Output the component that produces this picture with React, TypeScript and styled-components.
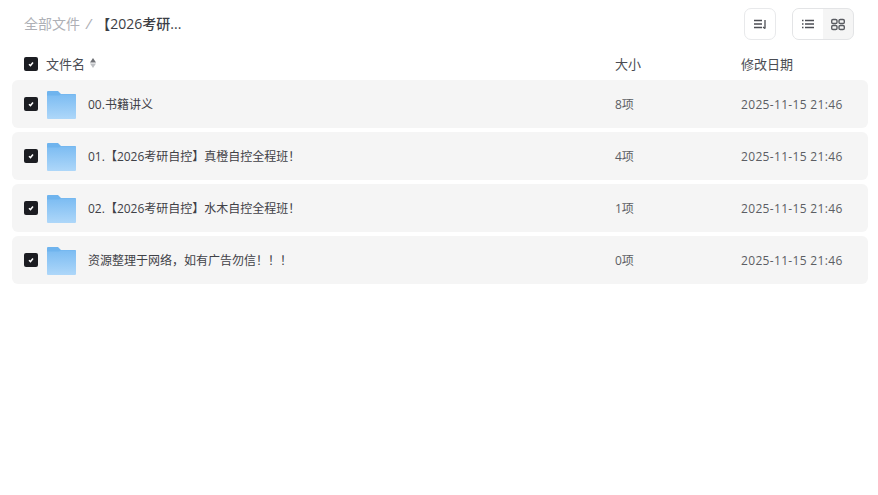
import styled, { createGlobalStyle } from "styled-components";

const GlobalStyle = createGlobalStyle`
    html, body {
        margin: 0;
        background: #fff;
        font-family: "Open Sans", "Noto Sans CJK SC", sans-serif;
        color: #25262b;
    }
`;

const Page = styled.div`
    width: 878px;
    height: 495px;
    padding: 8px 10px 0 12px;
    box-sizing: border-box;
    overflow: hidden;
`;

const TopBar = styled.div`
    display: flex;
    align-items: center;
    justify-content: space-between;
    height: 32px;
    padding: 0 14px 0 12px;
`;

const Breadcrumb = styled.div`
    display: flex;
    align-items: center;
    font-size: 14px;
    margin-top: -2px;
`;

const Crumb = styled.span`
    color: #aeb0b6;
`;

const Separator = styled.span`
    color: #aeb0b6;
    margin: 0 5px 0 6px;
    font-size: 15px;
    font-style: italic;
`;

const CurrentCrumb = styled.span`
    font-weight: 500;
    color: #3c3e45;
`;

const Tools = styled.div`
    display: flex;
    gap: 16px;
`;

const ToolButton = styled.div`
    width: 30px;
    height: 30px;
    display: flex;
    align-items: center;
    justify-content: center;
    border: 1px solid #e8e9eb;
    border-radius: 7px;
`;

const ViewSwitch = styled.div`
    display: flex;
    height: 30px;
    border: 1px solid #e3e4e6;
    border-radius: 7px;
    background: #f5f5f5;
    overflow: hidden;
`;

const ViewOption = styled.div<{ $active?: boolean }>`
    width: 30px;
    display: flex;
    align-items: center;
    justify-content: center;
    background: ${(p) => (p.$active ? "#fff" : "transparent")};
`;

const Grid = styled.div`
    display: grid;
    grid-template-columns: 1fr 126px 127px;
    align-items: center;
`;

const HeaderRow = styled(Grid)`
    height: 40px;
    padding: 6px 0 0 12px;
    box-sizing: border-box;
    font-size: 13px;
    color: #4a4c53;
`;

const NameHead = styled.div`
    display: flex;
    align-items: center;
    gap: 8px;
`;

const HeadCheck = styled.div`
    display: flex;
    margin-top: 2px;
`;

const HeadLabel = styled.div`
    display: flex;
    align-items: center;
    gap: 4px;
`;

const FileList = styled.div`
    display: flex;
    flex-direction: column;
    gap: 4px;
`;

const FileRow = styled(Grid)`
    height: 48px;
    padding-left: 12px;
    background: #f5f5f5;
    border-radius: 6px;
    font-size: 12px;
    color: #5c5e64;
`;

const NameCell = styled.div`
    display: flex;
    align-items: center;
`;

const FileName = styled.span`
    margin-left: 11px;
    color: #3f4147;
`;

const DateCell = styled.div`
    letter-spacing: 0.33px;
`;

const Check = styled.span`
    width: 14px;
    height: 14px;
    flex: none;
    border-radius: 2px;
    background: #1c1d22;
    display: flex;
    align-items: center;
    justify-content: center;
`;

const Folder = styled.svg`
    margin: 2px 0 0 9px;
    flex: none;
`;

const CheckBox = () => (
    <Check>
        <svg width="10" height="10" viewBox="0 0 10 10">
            <path d="M3 5.200 4.500 6.600 7 3.600" fill="none" stroke="#fff" strokeWidth="1.500" />
        </svg>
    </Check>
);

const FolderIcon = ({ id }: { id: string }) => (
    <Folder width="30" height="28" viewBox="0 0 30 28">
        <defs>
            <linearGradient id={id} x1="0" y1="0" x2="0" y2="1">
                <stop offset="0" stopColor="#7cbcf2" />
                <stop offset="1" stopColor="#aed7f9" />
            </linearGradient>
        </defs>
        <path d="M1 0h10l3 3h14a1 1 0 0 1 1 1v2H0V1a1 1 0 0 1 1-1z" fill="#6fb4ee" />
        <path d="M0 4.500h12l2-1h14a1 1 0 0 1 1 1v22.500a1 1 0 0 1-1 1H1a1 1 0 0 1-1-1z" fill={`url(#${id})`} />
    </Folder>
);

const SortCaret = () => (
    <svg width="8" height="12" viewBox="0 0 8 12">
        <path d="M4 1 7 5.500H1z" fill="#6f7176" />
        <path d="M4 11 7 6.500H1z" fill="#bdbfc3" />
    </svg>
);

const files = [
    { name: "00.书籍讲义", size: "8项" },
    { name: "01.【2026考研自控】真橙自控全程班！", size: "4项" },
    { name: "02.【2026考研自控】水木自控全程班！", size: "1项" },
    { name: "资源整理于网络，如有广告勿信！！！", size: "0项" },
];

const App = () => (
    <Page>
        <GlobalStyle />
        <TopBar>
            <Breadcrumb>
                <Crumb>全部文件</Crumb>
                <Separator>/</Separator>
                <CurrentCrumb>【2026考研...</CurrentCrumb>
            </Breadcrumb>
            <Tools>
                <ToolButton>
                    <svg width="16" height="16" viewBox="0 0 16 16" fill="none" stroke="#4c4e54" strokeWidth="1.300">
                        <path d="M2 4.500h8M2 8h8M2 11.500h8M13 4v8.500" />
                        <path d="M11 11 13 12.500" />
                    </svg>
                </ToolButton>
                <ViewSwitch>
                    <ViewOption $active>
                        <svg width="16" height="16" viewBox="0 0 16 16" fill="none" stroke="#4c4e54" strokeWidth="1.300">
                            <path d="M5 4.500h9M5 8h9M5 11.500h9M2 4.500h1.500M2 8h1.500M2 11.500h1.500" />
                        </svg>
                    </ViewOption>
                    <ViewOption>
                        <svg width="16" height="16" viewBox="0 0 16 16" fill="none" stroke="#5a5c62" strokeWidth="1.400">
                            <rect x="1.700" y="3.500" width="5.300" height="4" rx="1.300" />
                            <rect x="9" y="3.500" width="5.300" height="4" rx="1.300" />
                            <rect x="1.700" y="9.500" width="5.300" height="4" rx="1.300" />
                            <rect x="9" y="9.500" width="5.300" height="4" rx="1.300" />
                        </svg>
                    </ViewOption>
                </ViewSwitch>
            </Tools>
        </TopBar>
        <HeaderRow>
            <NameHead>
                <HeadCheck>
                    <CheckBox />
                </HeadCheck>
                <HeadLabel>
                    文件名
                    <SortCaret />
                </HeadLabel>
            </NameHead>
            <div>大小</div>
            <div>修改日期</div>
        </HeaderRow>
        <FileList>
            {files.map((file, i) => (
                <FileRow key={file.name}>
                    <NameCell>
                        <CheckBox />
                        <FolderIcon id={`folder-${i}`} />
                        <FileName>{file.name}</FileName>
                    </NameCell>
                    <div>{file.size}</div>
                    <DateCell>2025-11-15 21:46</DateCell>
                </FileRow>
            ))}
        </FileList>
    </Page>
);

export default App;
